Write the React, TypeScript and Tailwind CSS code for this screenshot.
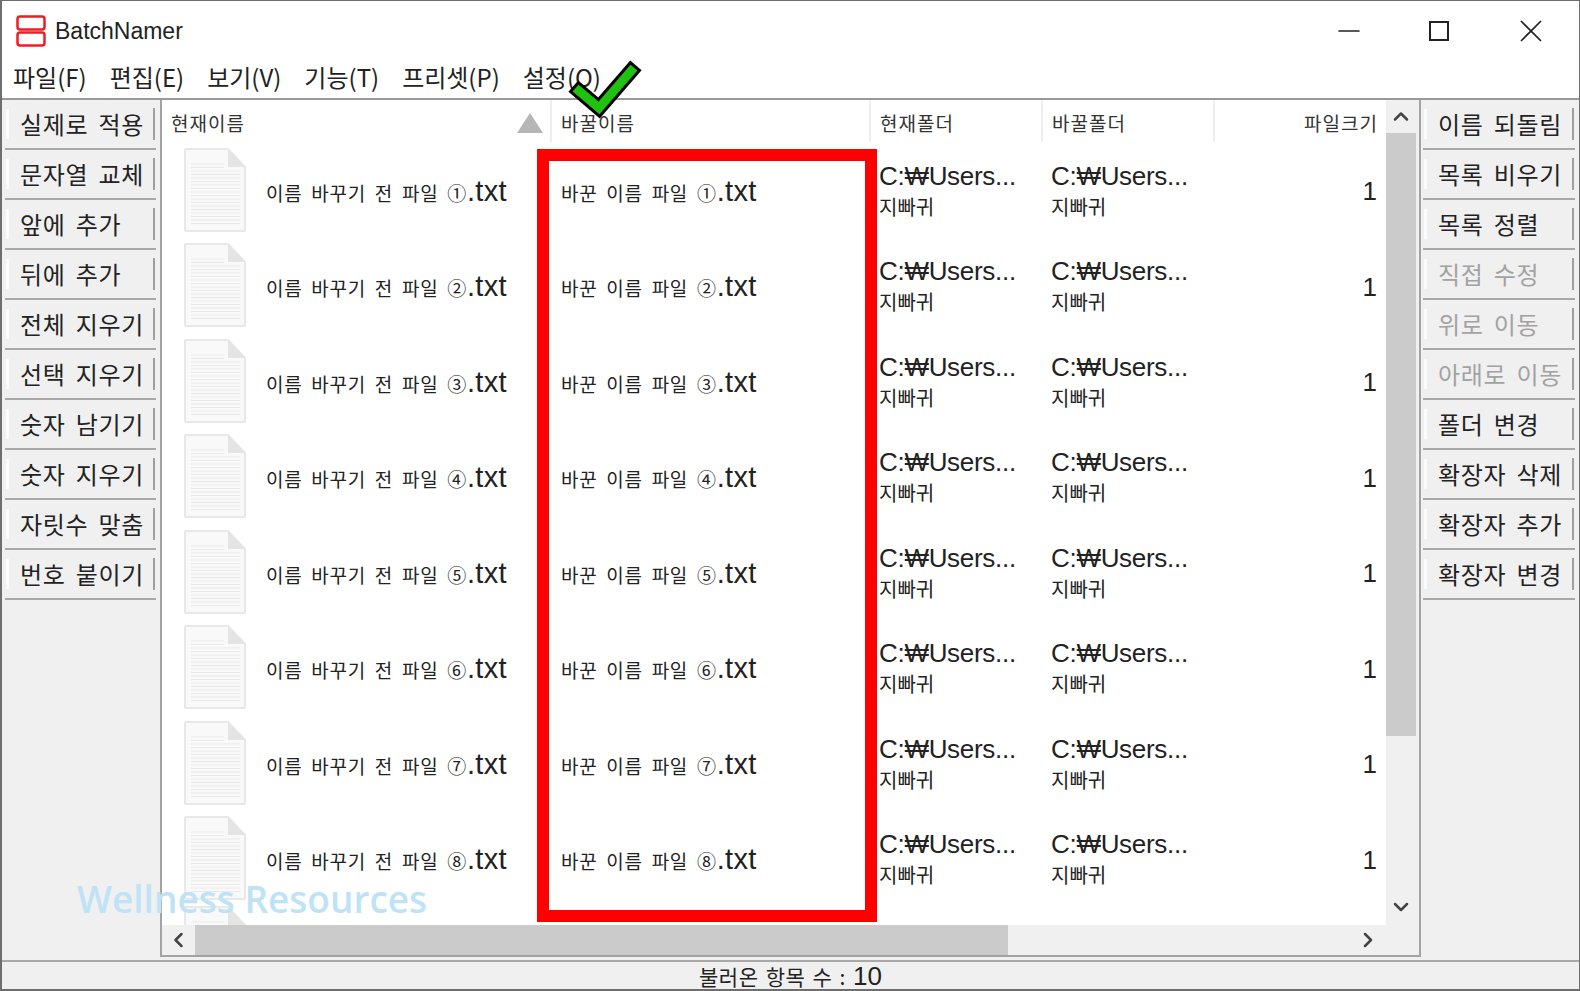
import { Minus, X, ChevronUp, ChevronDown, ChevronLeft, ChevronRight } from 'lucide-react';

const leftButtons = ['실제로 적용', '문자열 교체', '앞에 추가', '뒤에 추가', '전체 지우기', '선택 지우기', '숫자 남기기', '숫자 지우기', '자릿수 맞춤', '번호 붙이기'];
const rightButtons = [
  { label: '이름 되돌림' },
  { label: '목록 비우기' },
  { label: '목록 정렬' },
  { label: '직접 수정', disabled: true },
  { label: '위로 이동', disabled: true },
  { label: '아래로 이동', disabled: true },
  { label: '폴더 변경' },
  { label: '확장자 삭제' },
  { label: '확장자 추가' },
  { label: '확장자 변경' },
];
const menus = ['파일(F)', '편집(E)', '보기(V)', '기능(T)', '프리셋(P)', '설정(O)'];
const circled = ['①', '②', '③', '④', '⑤', '⑥', '⑦', '⑧'];

function AppLogo() {
  return (
    <svg width="30" height="32" viewBox="0 0 30 32" fill="#fff" stroke="#ee1c25" strokeWidth="2.5">
      <rect x="1.5" y="1.5" width="27" height="13" rx="2.5" />
      <rect x="1.5" y="17.5" width="27" height="13" rx="2.5" />
    </svg>
  );
}

function FileIcon() {
  const lines = Array.from({ length: 18 }, (_, i) => 16 + i * 3.5);
  return (
    <svg width="62" height="84" viewBox="0 0 62 84" className="shrink-0">
      <path d="M1 2 a1 1 0 0 1 1-1 H44 L61 19 V82 a1 1 0 0 1-1 1 H2 a1 1 0 0 1-1-1 Z" fill="#f9f9f9" stroke="#e8e8e8" strokeWidth="2" />
      <path d="M44 1 V19 H61 Z" fill="#e4e4e4" />
      {lines.map((y) => (
        <line key={y} x1="7" x2={y < 20 ? 40 : 56} y1={y} y2={y} stroke="#e9e9e9" strokeWidth="1" />
      ))}
    </svg>
  );
}

function SideButton({ label, disabled, className }: { label: string; disabled?: boolean; className: string }) {
  return (
    <div className={`h-[50px] flex items-center border-b-2 border-[#a9a9a9] ${className}`}>
      <div className="ml-[1px] w-[3px] h-[30px] bg-[#fbfbfb] shrink-0" />
      <span className={`ml-[11px] text-[24px] leading-none tracking-[0.7px] [word-spacing:4px] whitespace-nowrap ${disabled ? 'text-[#a2a2a2]' : 'text-[#222]'}`}>{label}</span>
      <div className="ml-auto mr-[1px] w-[2px] h-[32px] bg-[#9f9f9f] shrink-0" />
    </div>
  );
}

function FileName({ text, n }: { text: string; n: string }) {
  return (
    <span className="pt-[3px] whitespace-nowrap text-[19px] tracking-[0.7px] [word-spacing:4px]">
      {text} {n}
      <span className="text-[29px] font-['Liberation_Sans'] tracking-[0.3px]">.txt</span>
    </span>
  );
}

function PathCell() {
  return (
    <div className="pl-[10px] flex flex-col">
      <span className="text-[26px] leading-[34px] tracking-[-0.3px] font-['Liberation_Sans'] whitespace-nowrap">C:₩Users...</span>
      <span className="text-[20px] leading-[28px]">지빠귀</span>
    </div>
  );
}

function Row({ n }: { n: string }) {
  return (
    <div className="h-[95.5px] shrink-0 grid grid-cols-[388px_319px_172px_172px_173px] items-center text-[#222]">
      <div className="flex items-center pl-[22px] gap-[20px]">
        <FileIcon />
        <FileName text="이름 바꾸기 전 파일" n={n} />
      </div>
      <div className="pl-[11px] flex">
        <FileName text="바꾼 이름 파일" n={n} />
      </div>
      <PathCell />
      <PathCell />
      <div className="text-right pr-[9px] pt-[4px] text-[26px] font-['Liberation_Sans']">1</div>
    </div>
  );
}

function HeaderCell({ label, right, children }: { label: string; right?: boolean; children?: React.ReactNode }) {
  return (
    <div className={`h-[42px] flex items-center border-l-2 first:border-l-0 border-[#eeeeee] ${right ? 'justify-end pr-[8px]' : 'pl-[9px]'}`}>
      <span className="pt-[4px] text-[19px] tracking-[1px] text-[#333] whitespace-nowrap">{label}</span>
      {children}
    </div>
  );
}

export default function App() {
  return (
    <div className="relative w-[1580px] h-[991px] overflow-hidden flex flex-col bg-[#f0f0f0] border border-[#6e6e6e] border-b-2 border-l-2 font-['Noto_Sans_CJK_KR','Liberation_Sans',sans-serif]">
      <div className="h-[60px] shrink-0 bg-white flex items-center pl-[14px]">
        <AppLogo />
        <span className="ml-[9px] text-[23px] text-[#222] font-['Liberation_Sans']">BatchNamer</span>
        <div className="ml-auto flex items-center gap-[63px] mr-[29px] text-[#222]">
          <Minus size={34} strokeWidth={1.2} />
          <div className="w-[20px] h-[20px] border-2 border-[#222]" />
          <X size={38} strokeWidth={1.1} />
        </div>
      </div>
      <div className="h-[39px] shrink-0 bg-white flex items-center pl-[11px] gap-[23px] border-b-2 border-[#999] text-[24px] text-[#222] leading-none pb-[6px]">
        {menus.map((m) => (
          <span key={m} className="whitespace-nowrap">{m}</span>
        ))}
      </div>

      <div className="h-[857px] shrink-0 flex">
        <div className="w-[158px] shrink-0">
          {leftButtons.map((b) => (
            <SideButton key={b} label={b} className="ml-[3px] w-[151px]" />
          ))}
        </div>

        <div className="w-[1261px] shrink-0 flex flex-col bg-[#f0f0f0] border-2 border-t-0 border-[#a3a3a3]">
          <div className="flex-1 min-h-0 flex">
            <div className="w-[1224px] shrink-0 bg-white flex flex-col overflow-hidden">
              <div className="grid grid-cols-[388px_319px_172px_172px_173px] shrink-0">
                <HeaderCell label="현재이름">
                  <svg width="26" height="20" viewBox="0 0 26 20" className="ml-auto mr-[7px] mt-[4px]">
                    <path d="M13 0 L26 20 H0 Z" fill="#b6b6b6" />
                  </svg>
                </HeaderCell>
                <HeaderCell label="바꿀이름" />
                <HeaderCell label="현재폴더" />
                <HeaderCell label="바꿀폴더" />
                <HeaderCell label="파일크기" right />
              </div>
              {circled.map((n) => (
                <Row key={n} n={n} />
              ))}
              {/* 아홉번째 행은 아이콘 윗부분만 보임 */}
              <div className="pl-[22px] shrink-0">
                <FileIcon />
              </div>
            </div>
            <div className="flex-1 pr-[3px] flex flex-col items-center text-[#444]">
              <ChevronUp size={24} strokeWidth={2.5} className="h-[33px] shrink-0" />
              <div className="w-full h-[603px] bg-[#cbcbcb]" />
              <ChevronDown size={24} strokeWidth={2.5} className="mt-auto mb-[6px]" />
            </div>
          </div>
          <div className="h-[30px] shrink-0 flex items-center text-[#444]">
            <ChevronLeft size={24} strokeWidth={2.5} className="w-[33px] shrink-0" />
            <div className="w-[813px] h-full bg-[#cbcbcb]" />
            <ChevronRight size={24} strokeWidth={2.5} className="ml-[348px]" />
          </div>
        </div>

        <div className="flex-1">
          {rightButtons.map((b) => (
            <SideButton key={b.label} label={b.label} disabled={b.disabled} className="ml-[2px] w-[152px]" />
          ))}
        </div>
      </div>

      <div className="flex-1 mt-[3px] border-t-2 border-[#a9a9a9] flex items-center justify-center text-[#222]">
        <span className="text-[21px] leading-none tracking-[0.5px] [word-spacing:2px]">불러온 항목 수 : <span className="text-[26px] font-['Liberation_Sans'] tracking-[0px]">10</span></span>
      </div>

      {/* 강조 표시 */}
      <div className="absolute left-[535px] top-[148px] w-[340px] h-[773px] border-[12px] border-[#ff0000] pointer-events-none" />
      <svg className="absolute left-[565px] top-[57px]" width="76" height="62" viewBox="0 0 76 62">
        <path d="M12 33 L32 50 L64 13" fill="none" stroke="#000" strokeWidth="15" strokeLinejoin="miter" strokeLinecap="square" />
        <path d="M12 33 L32 50 L64 13" fill="none" stroke="#1ec20f" strokeWidth="9" strokeLinejoin="miter" strokeLinecap="square" />
      </svg>
      <span className="absolute left-[75px] top-[870px] text-[37px] font-semibold font-['Open_Sans'] text-[#bfe3f6] whitespace-nowrap">Wellness Resources</span>
    </div>
  );
}
